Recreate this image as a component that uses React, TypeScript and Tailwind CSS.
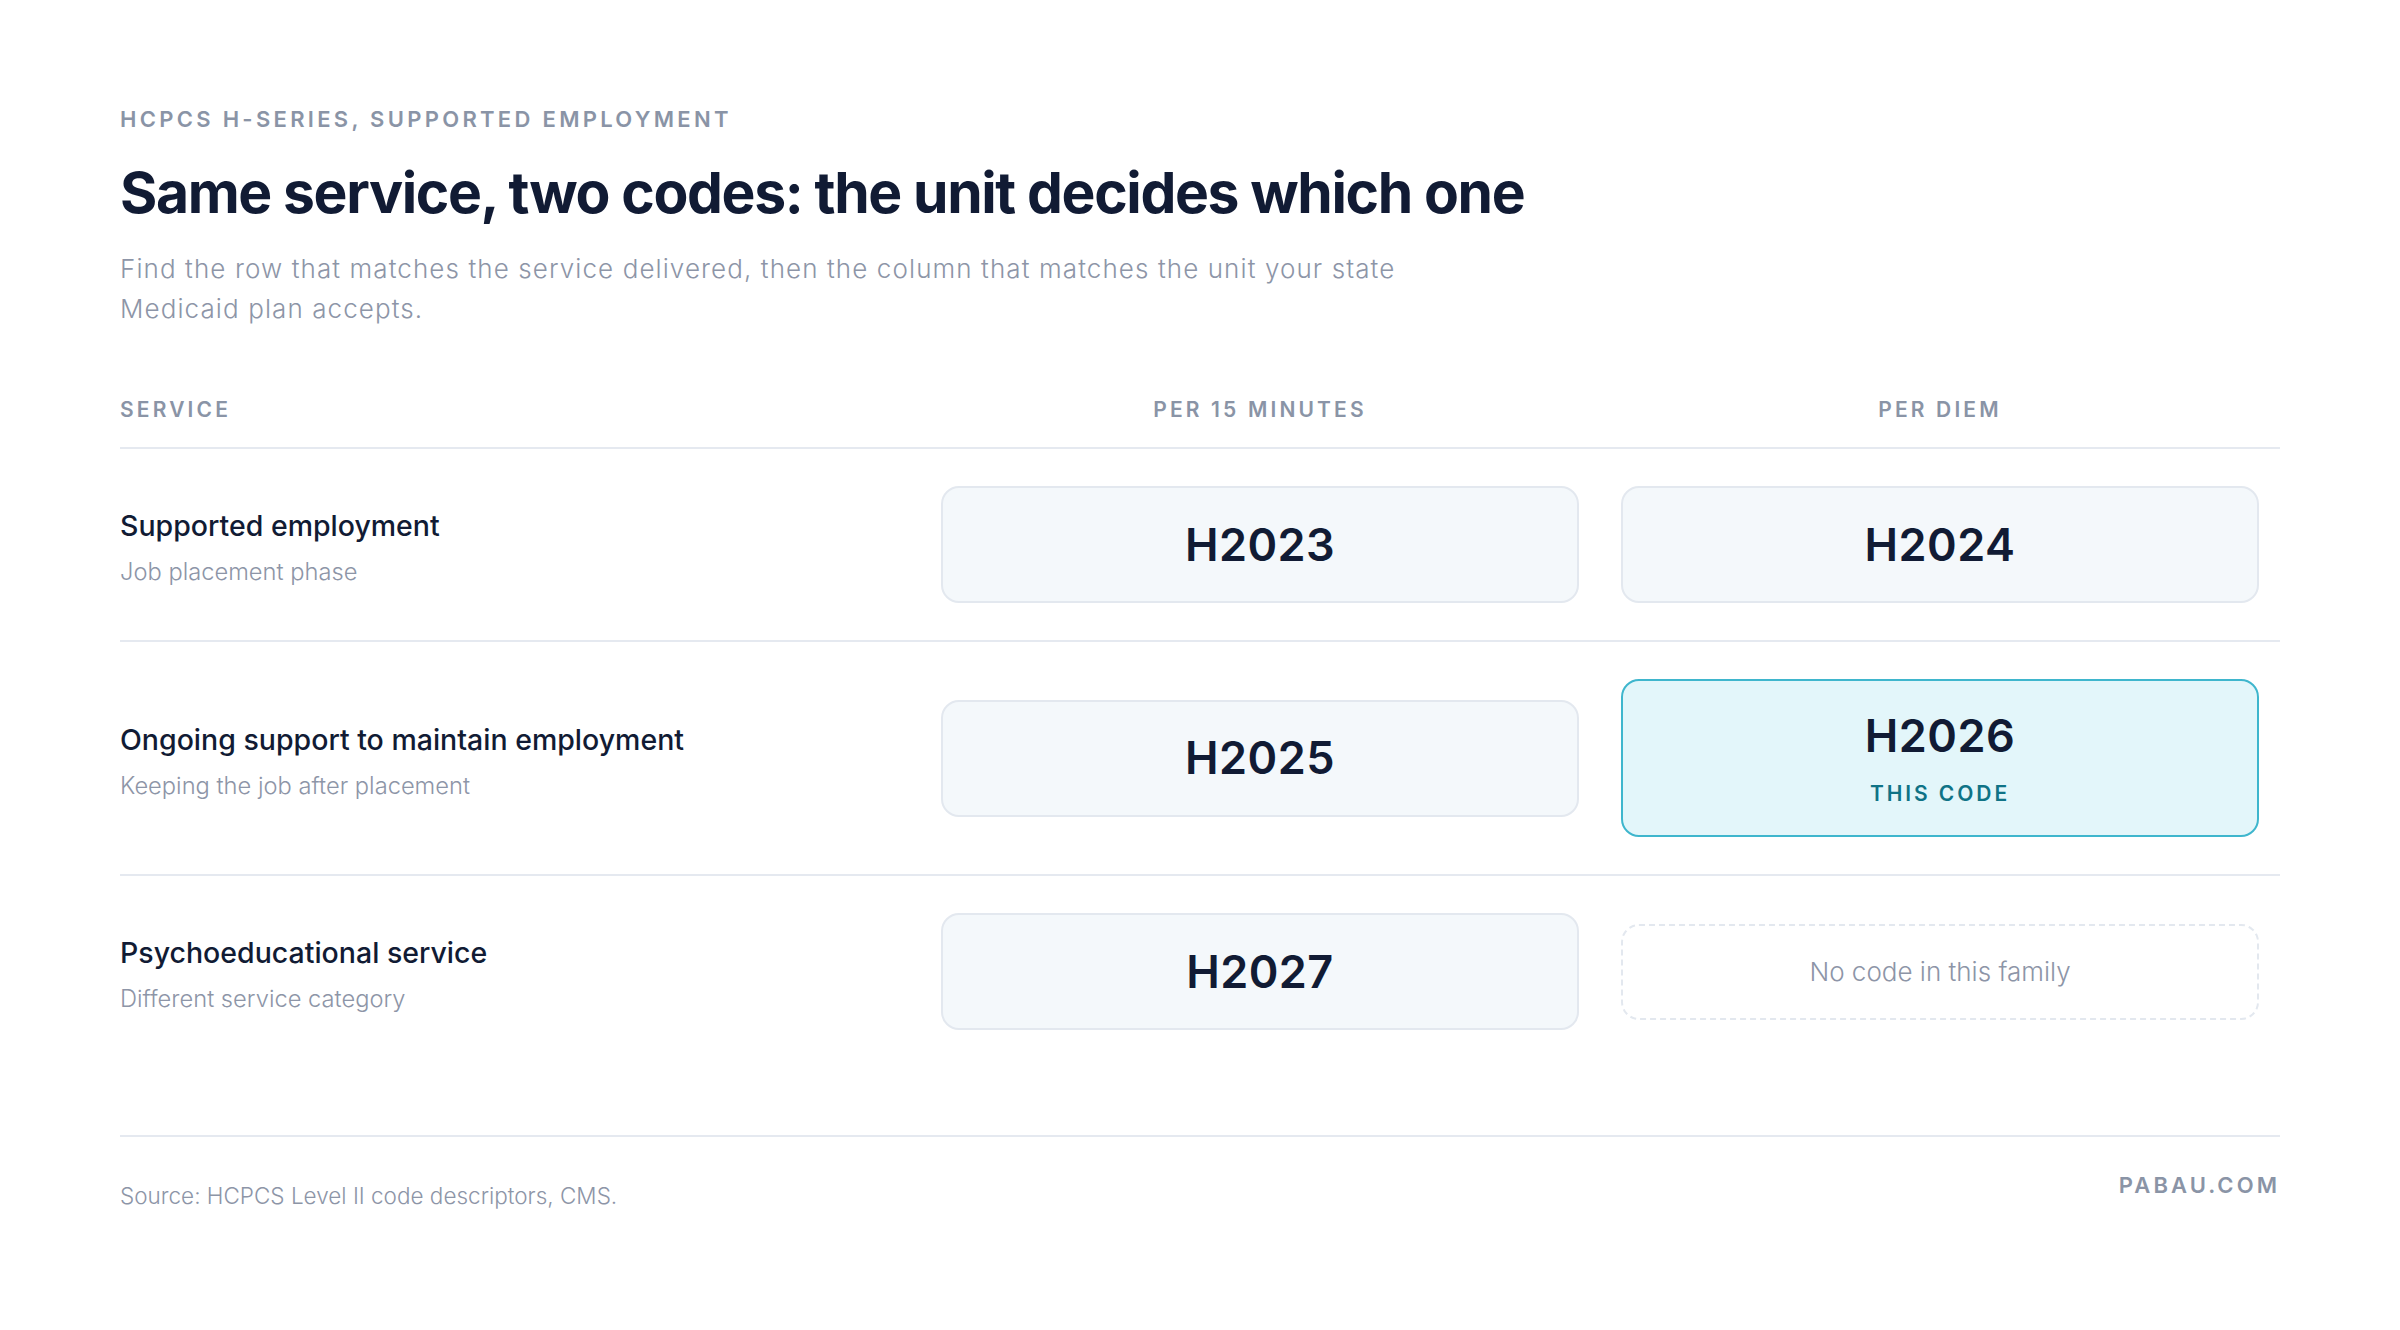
import React from 'react';

type Cell =
  | { kind: 'code'; code: string }
  | { kind: 'pick'; code: string }
  | { kind: 'none' };

const rows: { title: string; sub: string; cells: Cell[] }[] = [
  {
    title: 'Supported employment',
    sub: 'Job placement phase',
    cells: [
      { kind: 'code', code: 'H2023' },
      { kind: 'code', code: 'H2024' },
    ],
  },
  {
    title: 'Ongoing support to maintain employment',
    sub: 'Keeping the job after placement',
    cells: [
      { kind: 'code', code: 'H2025' },
      { kind: 'pick', code: 'H2026' },
    ],
  },
  {
    title: 'Psychoeducational service',
    sub: 'Different service category',
    cells: [{ kind: 'code', code: 'H2027' }, { kind: 'none' }],
  },
];

function CodeCell({ cell }: { cell: Cell }) {
  if (cell.kind === 'none') {
    return (
      <div className="h-[96px] rounded-[18px] border-2 border-dashed border-[#e3e8ef] flex items-center justify-center text-[26px] font-light text-[#8d95a7]">
        No code in this family
      </div>
    );
  }
  if (cell.kind === 'pick') {
    return (
      <div className="h-[158px] rounded-[18px] border-2 border-[#3fb6cd] bg-[#e3f6fa] flex flex-col items-center justify-center gap-[24px]">
        <span className="text-[45px] leading-[46px] font-semibold tracking-[0.01em]">{cell.code}</span>
        <span className="text-[21px] leading-[21px] font-semibold tracking-[0.14em] text-[#0f7386]">THIS CODE</span>
      </div>
    );
  }
  return (
    <div className="h-[117px] rounded-[18px] border-2 border-[#e3e8ef] bg-[#f4f8fb] flex items-center justify-center text-[45px] font-semibold tracking-[0.01em]">
      {cell.code}
    </div>
  );
}

export default function App() {
  return (
    <div className="min-h-screen bg-white font-['Inter',sans-serif] text-[#111b34]">
      <div className="w-[2160px] ml-[120px] pt-[105px]">
        {/* heading */}
        <p className="text-[22px] leading-[28px] font-semibold tracking-[0.15em] text-[#8a94a6]">
          HCPCS H-SERIES, SUPPORTED EMPLOYMENT
        </p>
        <h1 className="mt-[28px] text-[57px] leading-[64px] font-bold tracking-[-0.024em]">
          Same service, two codes: the unit decides which one
        </h1>
        <p className="mt-[24px] max-w-[1340px] text-[26px] leading-[40px] font-light tracking-[0.042em] text-[#8d95a7]">
          Find the row that matches the service delivered, then the column that matches the unit your state
          Medicaid plan accepts.
        </p>

        {/* table */}
        <div className="mt-[67px] grid grid-cols-[800px_680px_680px] pb-[23px] border-b-2 border-[#e5e9f0] text-[21px] leading-[28px] font-semibold tracking-[0.15em] text-[#8a94a6]">
          <span>SERVICE</span>
          <span className="text-center">PER 15 MINUTES</span>
          <span className="text-center">PER DIEM</span>
        </div>

        {rows.map((row, i) => (
          <div
            key={row.title}
            className={`grid grid-cols-[800px_680px_680px] items-center py-[37px] ${
              i < rows.length - 1 ? 'border-b-2 border-[#e5e9f0]' : ''
            }`}
          >
            <div className="pt-[6px]">
              <div className="text-[28.5px] leading-[36px] font-medium">{row.title}</div>
              <div className="mt-[13px] text-[23.7px] leading-[30px] font-light text-[#8d95a7]">{row.sub}</div>
            </div>
            {row.cells.map((c, j) => (
              <div key={j} className="px-[21px]">
                <CodeCell cell={c} />
              </div>
            ))}
          </div>
        ))}

        {/* footer */}
        <div className="mt-[68px] border-t-2 border-[#e5e9f0] pt-[34px] flex justify-between items-start">
          <span className="mt-[11px] text-[22.5px] leading-[28px] font-light text-[#8d95a7]">
            Source: HCPCS Level II code descriptors, CMS.
          </span>
          <span className="text-[22px] leading-[28px] font-semibold tracking-[0.14em] text-[#8a94a6]">PABAU.COM</span>
        </div>
      </div>
    </div>
  );
}
